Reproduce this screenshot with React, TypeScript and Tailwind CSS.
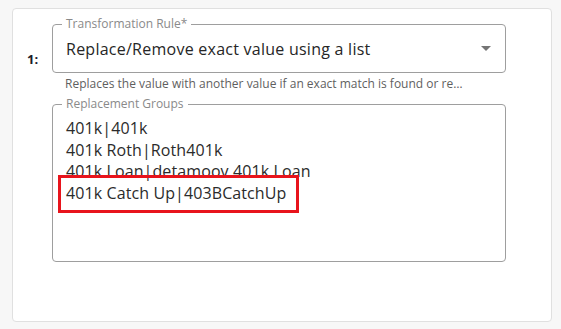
import React from 'react';

const font = { fontFamily: '"Open Sans", "Liberation Sans", sans-serif' };

const groups = [
  '401k|401k',
  '401k Roth|Roth401k',
  '401k Loan|detamoov 401k Loan',
  '401k Catch Up|403BCatchUp',
];

export default function App() {
  return (
    <div className="min-h-screen bg-[#f7f7f7] pt-2 pl-3" style={font}>
      <div className="w-[540px] h-[314px] bg-white border border-[#e0e0e0] rounded flex">
        {/* Row index */}
        <div className="w-[39px] pl-[14px] pt-[41px] text-[13px] font-bold text-[#1c1c2b]">1:</div>

        <div className="w-[454px] pt-[15px]">
          {/* Transformation rule select */}
          <div className="relative h-[49px] border border-[#9e9e9e] rounded flex items-center pl-[13px] pr-[14px]">
            <span className="absolute -top-[9px] left-[9px] bg-white px-[4px] text-[12px] leading-4 text-[#8a8a8a]">
              Transformation Rule*
            </span>
            <span className="flex-1 text-[16px] tracking-[0.25px] text-[#262626]">Replace/Remove exact value using a list</span>
            <svg width="10" height="5" viewBox="0 0 10 5">
              <path d="M0 0 L10 0 L5 5 Z" fill="#757575" />
            </svg>
          </div>
          <p className="mt-[3px] ml-[13px] text-[12px] leading-4 text-[#5f5f5f] truncate w-[410px]">
            Replaces the value with another value if an exact match is found or re…
          </p>

          {/* Replacement groups textarea */}
          <div className="relative mt-[12px] h-[158px] border border-[#9e9e9e] rounded pl-[13px] pt-[13px]">
            <span className="absolute -top-[9px] left-[9px] bg-white px-[4px] text-[12px] leading-4 text-[#8a8a8a]">
              Replacement Groups
            </span>
            <div className="relative text-[16px] leading-[21.5px] tracking-[0.1px] text-[#2b2b2b]">
              {groups.map((g) => (
                <div key={g}>{g}</div>
              ))}
              {/* highlight */}
              <div className="absolute left-[-8px] top-[57px] w-[241px] h-[38px] border-[3px] border-[#e8141c]" />
            </div>
          </div>
        </div>
      </div>
    </div>
  );
}
